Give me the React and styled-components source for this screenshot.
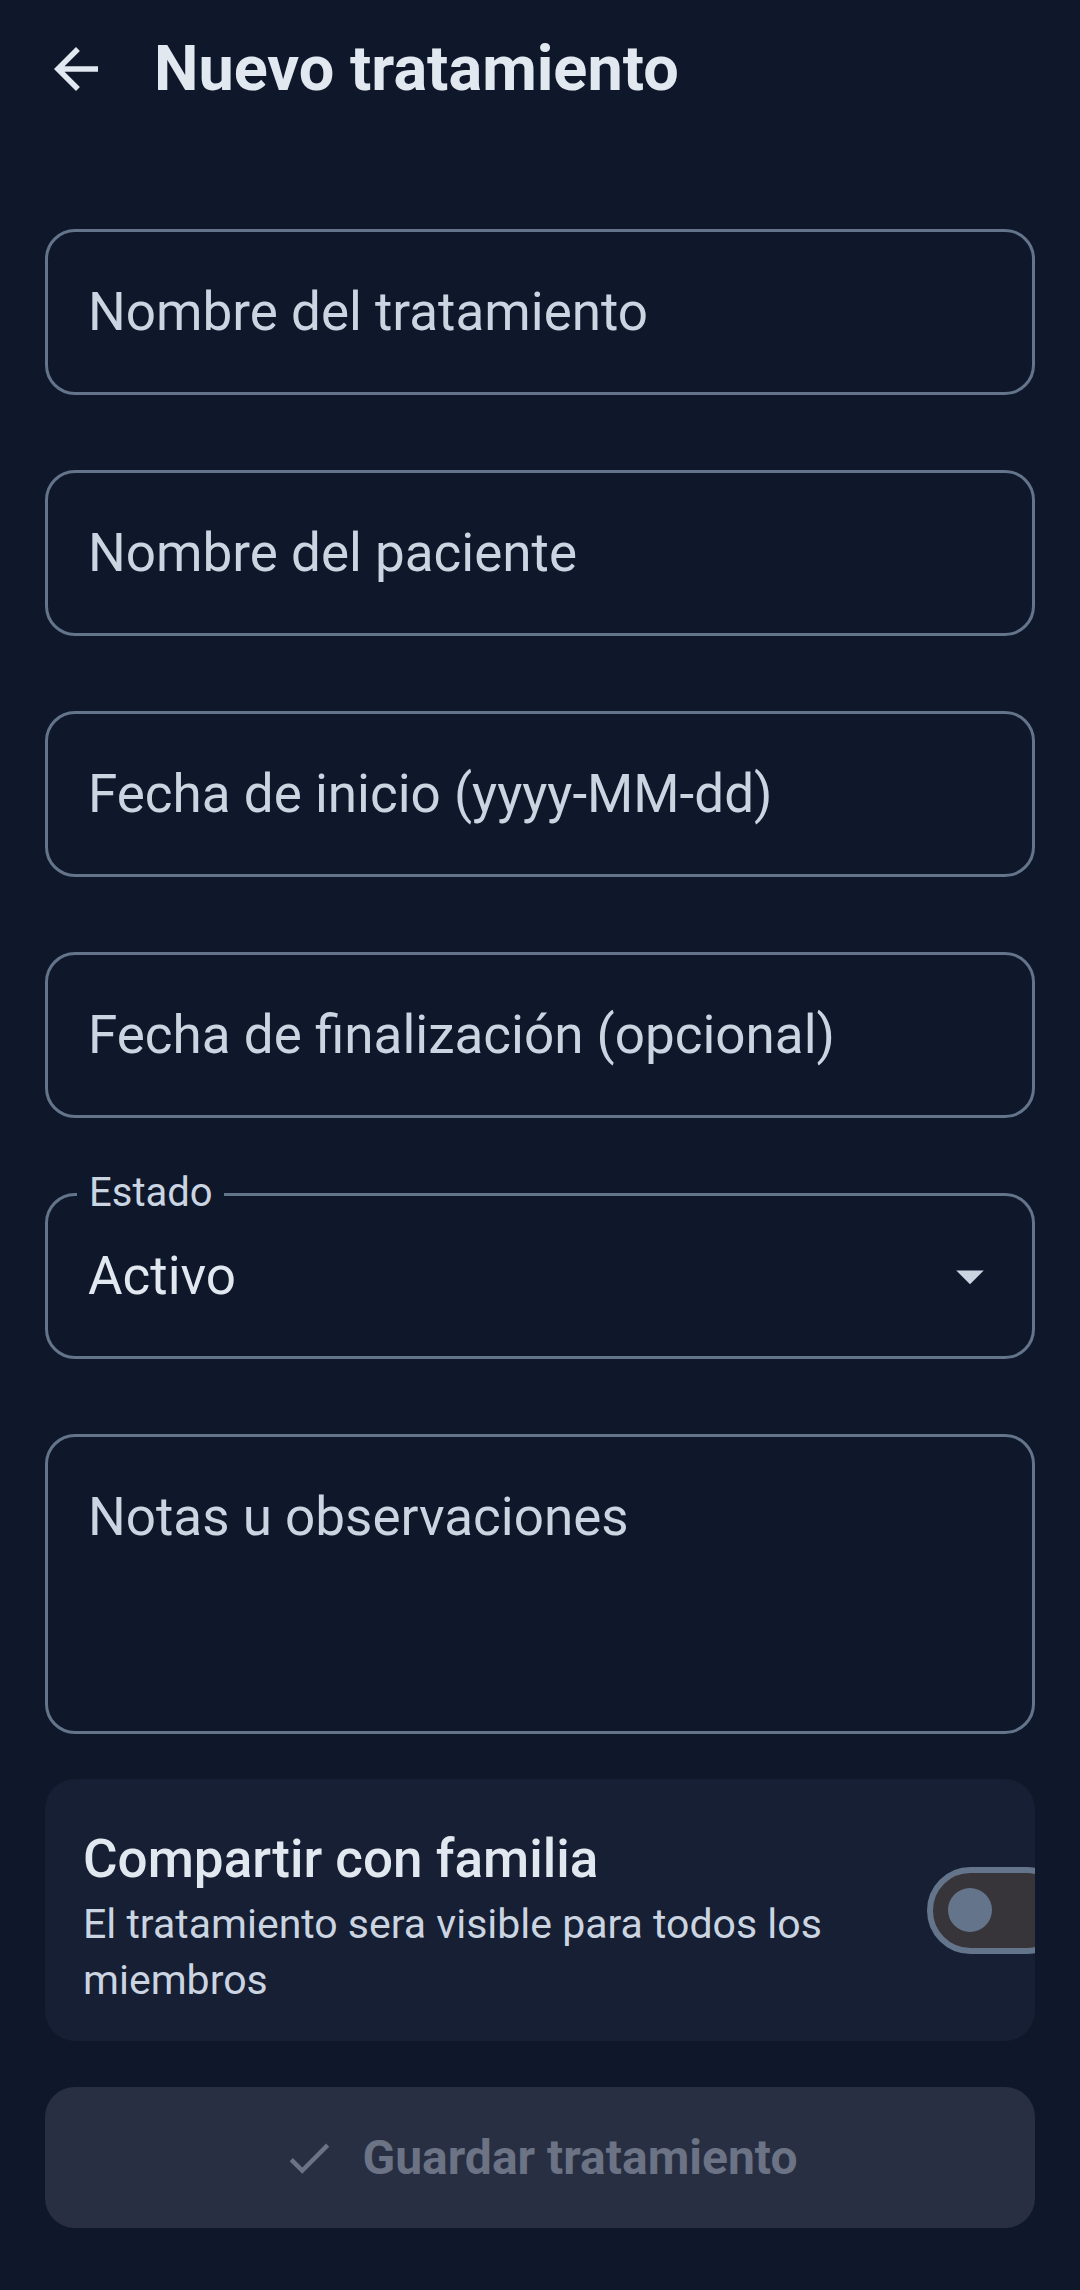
import React from 'react';
import styled, { createGlobalStyle } from 'styled-components';

const GlobalStyle = createGlobalStyle`
      html, body {
        margin: 0;
        padding: 0;
        background-color: #0f172a;
      }

      body {
        font-family: Roboto, "Noto Sans", "Liberation Sans", sans-serif;
        -webkit-font-smoothing: antialiased;
      }

      * {
        box-sizing: border-box;
      }
`;

const Screen = styled.div`
      width: 1080px;
      min-height: 2290px;
      background-color: #0f172a;
      color: #e2e8f0;
`;

const TopBar = styled.header`
      display: flex;
      align-items: center;
      gap: 45px;
      height: 138px;
      padding-left: 43px;
`;

const BackButton = styled.button`
      display: flex;
      align-items: center;
      justify-content: center;
      width: 66px;
      height: 66px;
      padding: 0;
      border: none;
      background: none;
      color: #e2e8f0;
      cursor: pointer;
`;

const Title = styled.h1`
      margin: 0;
      font-size: 63px;
      font-weight: 700;
      line-height: 74px;
      color: #e2e8f0;
`;

const Form = styled.form`
      display: flex;
      flex-direction: column;
      padding: 91px 45px 0 45px;
`;

const Fields = styled.div`
      display: flex;
      flex-direction: column;
      gap: 75px;
`;

const Input = styled.input`
      display: block;
      width: 100%;
      height: 166px;
      padding: 0 40px;
      border: 3px solid #64748b;
      border-radius: 30px;
      background-color: transparent;
      color: #e2e8f0;
      font-family: inherit;
      font-size: 53px;
      outline: none;

      &::placeholder {
        color: #cbd5e1;
        opacity: 1;
      }
`;

const TextArea = styled.textarea`
      display: block;
      width: 100%;
      height: 300px;
      padding: 49px 40px 0 40px;
      border: 3px solid #64748b;
      border-radius: 30px;
      background-color: transparent;
      color: #e2e8f0;
      font-family: inherit;
      font-size: 53px;
      line-height: 62px;
      resize: none;
      outline: none;

      &::placeholder {
        color: #cbd5e1;
        opacity: 1;
      }
`;

const Select = styled.div`
      position: relative;
      display: flex;
      align-items: center;
      justify-content: space-between;
      height: 166px;
      padding: 0 29px 0 40px;
      border: 3px solid #64748b;
      border-radius: 30px;
`;

const FloatingLabel = styled.span`
      position: absolute;
      top: -26px;
      left: 29px;
      padding: 0 11px 0 12px;
      background-color: #0f172a;
      color: #cbd5e1;
      font-size: 40px;
      line-height: 46px;
`;

const SelectValue = styled.span`
      font-size: 53px;
      color: #e2e8f0;
`;

const Card = styled.div`
      display: flex;
      align-items: center;
      gap: 24px;
      min-height: 262px;
      margin-top: 45px;
      padding-left: 38px;
      border-radius: 30px;
      background-color: #161f33;
      overflow: hidden;
`;

const CardText = styled.div`
      flex: 1;
      min-width: 0;
      padding-top: 16px;
`;

const CardTitle = styled.div`
      font-size: 53px;
      font-weight: 500;
      line-height: 62px;
      color: #e2e8f0;
`;

const CardSubtitle = styled.div`
      margin-top: 6px;
      font-size: 41px;
      line-height: 56px;
      color: #cbd5e1;
`;

const Switch = styled.span`
      position: relative;
      flex-shrink: 0;
      width: 143px;
      height: 87px;
      margin-right: -35px;
      border: 6px solid #64748b;
      border-radius: 44px;
      background-color: #37353a;
`;

const Thumb = styled.span`
      position: absolute;
      top: 15.5px;
      left: 15px;
      width: 44px;
      height: 44px;
      border-radius: 50%;
      background-color: #64748b;
`;

const SaveButton = styled.button`
      display: flex;
      align-items: center;
      justify-content: center;
      gap: 26px;
      height: 141px;
      margin-top: 46px;
      border: none;
      border-radius: 30px;
      background-color: #282f42;
      color: #6b7385;
      font-family: inherit;
      font-size: 48px;
      font-weight: 700;
`;

const ArrowBack = () => (
    <svg width="66" height="66" viewBox="0 0 24 24" fill="currentColor">
        <path d="M20 11H7.83l5.59-5.59L12 4l-8 8 8 8 1.41-1.41L7.830 13H20v-2z" />
    </svg>
);

const DropArrow = () => (
    <svg width="66" height="66" viewBox="0 0 24 24" fill="#cbd5e1">
        <path d="M7 10l5 5 5-5z" />
    </svg>
);

const Check = () => (
    <svg width="54" height="54" viewBox="0 0 24 24" fill="currentColor">
        <path d="M9 16.17L4.83 12l-1.42 1.41L9 19 21 7l-1.41-1.41z" />
    </svg>
);

export default () => {
    return (
        <Screen>
            <GlobalStyle />
            <TopBar>
                <BackButton aria-label="Volver">
                    <ArrowBack />
                </BackButton>
                <Title>
                    Nuevo tratamiento
                </Title>
            </TopBar>
            <Form onSubmit={e => e.preventDefault()}>
                <Fields>
                    <Input placeholder="Nombre del tratamiento" />
                    <Input placeholder="Nombre del paciente" />
                    <Input placeholder="Fecha de inicio (yyyy-MM-dd)" />
                    <Input placeholder="Fecha de finalización (opcional)" />
                    <Select>
                        <FloatingLabel>
                            Estado
                        </FloatingLabel>
                        <SelectValue>
                            Activo
                        </SelectValue>
                        <DropArrow />
                    </Select>
                    <TextArea placeholder="Notas u observaciones" />
                </Fields>
                <Card>
                    <CardText>
                        <CardTitle>
                            Compartir con familia
                        </CardTitle>
                        <CardSubtitle>
                            El tratamiento sera visible para todos los miembros
                        </CardSubtitle>
                    </CardText>
                    <Switch>
                        <Thumb />
                    </Switch>
                </Card>
                <SaveButton type="submit" disabled>
                    <Check />
                    Guardar tratamiento
                </SaveButton>
            </Form>
        </Screen>
    )
}
